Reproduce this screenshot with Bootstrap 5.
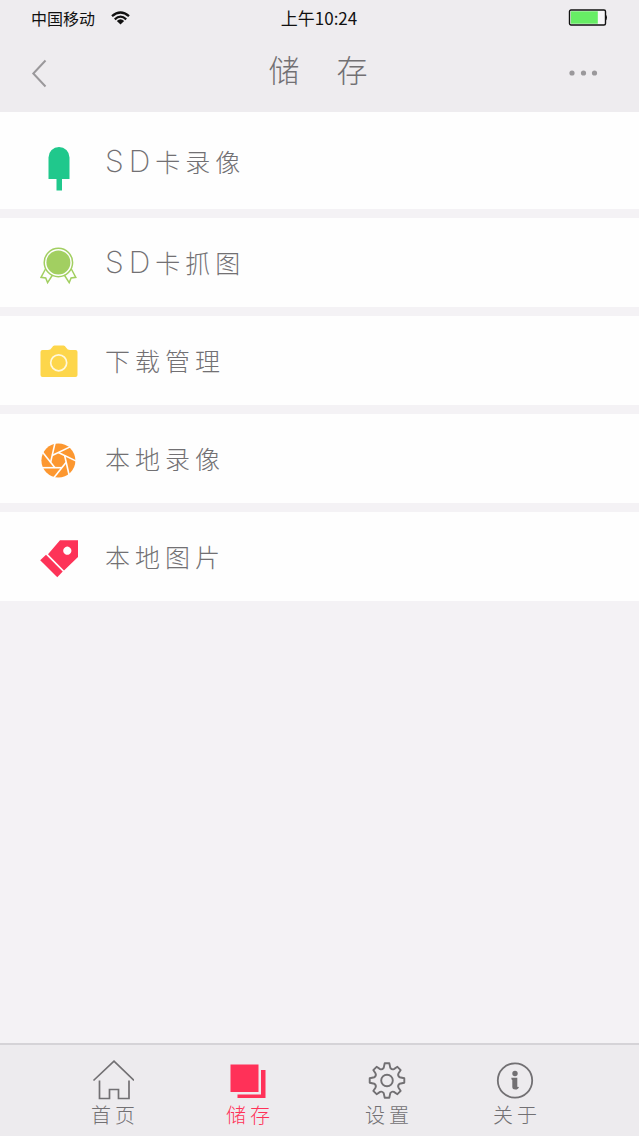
<!DOCTYPE html>
<html lang="zh-CN">
<head>
<meta charset="utf-8">
<meta name="viewport" content="width=device-width, initial-scale=1">
<title>储存</title>
<link href="https://cdn.jsdelivr.net/npm/bootstrap@5.3.0/dist/css/bootstrap.min.css" rel="stylesheet">
<style>
  body { font-family: "Noto Sans", "Noto Sans CJK SC", sans-serif; background: #f4f2f5; color: #727073; }
  .top-area { background: #eeecef; height: 112px; }
  .status-bar { height: 35px; padding: 0 32px 0 31px; color: #111; font-size: 16px; line-height: 20px; font-family: "Noto Sans CJK SC", sans-serif; }
  .status-bar .clock { font-size: 17px; }
  .title-bar { padding: 0 26px; height: 76px; }
  .title-bar h1 { font-family: "Noto Sans CJK SC", sans-serif; font-weight: 300; font-size: 31px; line-height: 40px; letter-spacing: 3px; padding-bottom: 8px; }
  .icon-btn { display: block; border: 0; background: none; padding: 0; color: #9a989b; line-height: 1; }
  .store-list { gap: 9px; }
  .store-list a { min-height: 89px; padding: 2px 37px 0; gap: 24px; background: #fefefe; color: #727073;
    font: 200 25px/36px "Noto Sans CJK SC", sans-serif; letter-spacing: 5px; }
  .store-list li:first-child a { min-height: 97px; padding-top: 4px; }
  .store-list a > span { padding-bottom: 4px; }
  .latin { font: 200 30px/36px Inter, sans-serif; letter-spacing: 5px; }
  .tab-bar { display: grid; grid-template-columns: 134fr 136fr 142fr 114fr; padding: 15px 67px 8px 46px;
    background: #edebee; border-top: 2px solid #d5d3d7; }
  .tab-bar a { color: #727073; font: 300 20px/26px "Noto Sans CJK SC", sans-serif; letter-spacing: 4px; }
  .tab-bar a > span { padding-left: 4px; }
  .tab-bar a.active { color: #ff3158; }
  svg { display: block; flex: none; }
</style>
</head>
<body>
<div class="d-flex flex-column min-vh-100">
  <header class="top-area">
    <div class="status-bar row g-0 align-items-center">
      <div class="col d-flex align-items-center gap-3">
        <span>中国移动</span>
        <svg width="19" height="14" viewBox="0 0 19 14" fill="none" stroke="#111" stroke-width="2.3" aria-hidden="true">
          <path d="M1 5.2Q9.500-2.200 18 5.200M3.800 8.300Q9.500 3 15.200 8.300"/>
          <path d="M9.500 13.400L5.800 10Q9.500 6.700 13.200 10Z" fill="#111" stroke="none"/>
        </svg>
      </div>
      <div class="col-auto clock">上午10:24</div>
      <div class="col d-flex justify-content-end">
        <svg width="39" height="18" viewBox="0 0 39 18" aria-hidden="true">
          <rect x="1.500" y="1" width="36" height="15" rx="1.500" fill="#f7f6f8" stroke="#111" stroke-width="1.400"/>
          <rect x="2.800" y="2.300" width="27" height="12.400" fill="#67ed65"/>
          <path d="M37 5.500q2 .5 2 3t-2 3z" fill="#111"/>
        </svg>
      </div>
    </div>
    <div class="title-bar row g-0 align-items-center">
      <div class="col">
        <button type="button" class="icon-btn" aria-label="返回">
          <svg width="26" height="32" viewBox="0 0 26 32" fill="none" stroke="currentColor" stroke-width="2"><path d="M19.500 3.500L7.300 16.500L19.500 29.500"/></svg>
        </button>
      </div>
      <h1 class="col-auto m-0">储　存</h1>
      <div class="col d-flex justify-content-end">
        <button type="button" class="icon-btn" aria-label="更多">
          <svg width="50" height="32" viewBox="0 0 50 32" fill="currentColor"><circle cx="9" cy="16" r="2.600"/><circle cx="20.500" cy="16" r="2.600"/><circle cx="31.500" cy="16" r="2.600"/></svg>
        </button>
      </div>
    </div>
  </header>

  <main class="flex-grow-1">
    <ul class="store-list list-unstyled d-flex flex-column m-0">
      <li><a href="#" class="d-flex align-items-center text-decoration-none">
        <svg width="44" height="56" viewBox="0 0 44 56" fill="#20c88c"><path d="M11.500 44V22.500a10.500 10.500 0 0 1 21 0V44H25V55.500H19.500V44Z"/></svg>
        <span><span class="latin">SD</span>卡录像</span></a></li>
      <li><a href="#" class="d-flex align-items-center text-decoration-none">
        <svg width="44" height="56" viewBox="0 0 44 56" fill="none" stroke="#a2cf61" stroke-width="1.500">
          <path d="M8.500 33L4 41.300L8.700 42L10.600 46.600L15.500 39M34.300 33L38.800 41.300L34.100 42L32.200 46.600L27.300 39"/>
          <circle cx="21.400" cy="26.500" r="14.200"/><circle cx="21.400" cy="26.500" r="12" fill="#a2cf61" stroke="none"/></svg>
        <span><span class="latin">SD</span>卡抓图</span></a></li>
      <li><a href="#" class="d-flex align-items-center text-decoration-none">
        <svg width="44" height="56" viewBox="0 0 44 56" fill="#fdd64b">
          <path d="M5.500 16H11Q13.500 16 15 13.500Q16 11.500 17.500 11.500H26.500Q28 11.500 29 13.500Q30.500 16 33 16H38.500Q40.500 16 40.500 18V41Q40.500 43 38.500 43H5.500Q3.500 43 3.500 41V18Q3.500 16 5.500 16Z"/>
          <circle cx="21.700" cy="28.800" r="8" fill="none" stroke="#fff8dc" stroke-width="1.700"/></svg>
        <span>下载管理</span></a></li>
      <li><a href="#" class="d-flex align-items-center text-decoration-none">
        <svg width="44" height="56" viewBox="0 0 44 56">
          <g transform="translate(21.400 28.500)"><circle r="17" fill="#fc9730"/>
            <g stroke="#fefefe" stroke-width="1.600">
              <path id="blade" d="M-17 7.200H3.500"/>
              <use href="#blade" transform="rotate(51.430)"/><use href="#blade" transform="rotate(102.860)"/>
              <use href="#blade" transform="rotate(154.290)"/><use href="#blade" transform="rotate(205.710)"/>
              <use href="#blade" transform="rotate(257.140)"/><use href="#blade" transform="rotate(308.570)"/>
            </g></g></svg>
        <span>本地录像</span></a></li>
      <li><a href="#" class="d-flex align-items-center text-decoration-none">
        <svg width="44" height="56" viewBox="0 0 44 56" fill="#fd3358">
          <path fill-rule="evenodd" d="M23 10.300H41V27L27 40.500L11 24.200ZM30.300 16.600a4.100 4.100 0 1 0 .01 0Z"/>
          <path d="M9 24.800L25.700 41.500L20.300 47.300L3.200 30.200Z"/></svg>
        <span>本地图片</span></a></li>
    </ul>
  </main>

  <nav class="tab-bar" aria-label="主导航">
    <a href="#" class="d-flex flex-column align-items-center text-decoration-none">
      <svg width="42" height="42" viewBox="0 0 42 42" fill="none" stroke="currentColor" stroke-width="1.700"><path d="M1.500 20.500L22 1.200L42 20.500M7.500 20.500V38.500H17.500V29.500H26.500V38.500H37V20.500"/></svg>
      <span>首页</span></a>
    <a href="#" class="active d-flex flex-column align-items-center text-decoration-none" aria-current="page">
      <svg width="42" height="42" viewBox="0 0 42 42" fill="currentColor"><path d="M3.500 4.500H31.500V32H3.500ZM34 10H38.500V38H10.500V34.500H34Z"/></svg>
      <span>储存</span></a>
    <a href="#" class="d-flex flex-column align-items-center text-decoration-none">
      <svg width="42" height="42" viewBox="0 0 42 42" fill="none" stroke="currentColor" stroke-width="1.900" stroke-linejoin="round">
        <g transform="translate(21 20.500)"><circle r="5.800"/>
        <path d="M-3.300-12.600L-2.300-17.300H2.300L3.300-12.600Q5 -10.500 6.900-11.400L10.400-13.700L13.700-10.400L11.400-6.900Q10.500-5 12.600-3.300L17.300-2.300V2.300L12.600 3.300Q10.500 5 11.400 6.900L13.700 10.400L10.400 13.700L6.900 11.400Q5 10.500 3.300 12.600L2.300 17.300H-2.300L-3.300 12.600Q-5 10.500-6.900 11.400L-10.400 13.700L-13.700 10.400L-11.400 6.900Q-10.500 5-12.600 3.300L-17.300 2.300V-2.300L-12.600-3.300Q-10.500-5-11.400-6.900L-13.700-10.400L-10.400-13.700L-6.900-11.400Q-5-10.500-3.300-12.600Z"/></g></svg>
      <span>设置</span></a>
    <a href="#" class="d-flex flex-column align-items-center text-decoration-none">
      <svg width="42" height="42" viewBox="0 0 42 42"><g transform="translate(21 20.500)"><circle r="17.200" fill="none" stroke="currentColor" stroke-width="1.800"/>
        <circle cy="-7" r="2.700" fill="currentColor"/><path d="M-3.700-2.700H2.300V6Q2.300 6.700 4 6.200Q3.500 9 .3 9Q-2.700 9-2.700 6.500V-.5Q-3.700-.5-3.700-2.700Z" fill="currentColor"/></g></svg>
      <span>关于</span></a>
  </nav>
</div>
<script src="https://cdn.jsdelivr.net/npm/bootstrap@5.3.0/dist/js/bootstrap.bundle.min.js"></script>
</body>
</html>
